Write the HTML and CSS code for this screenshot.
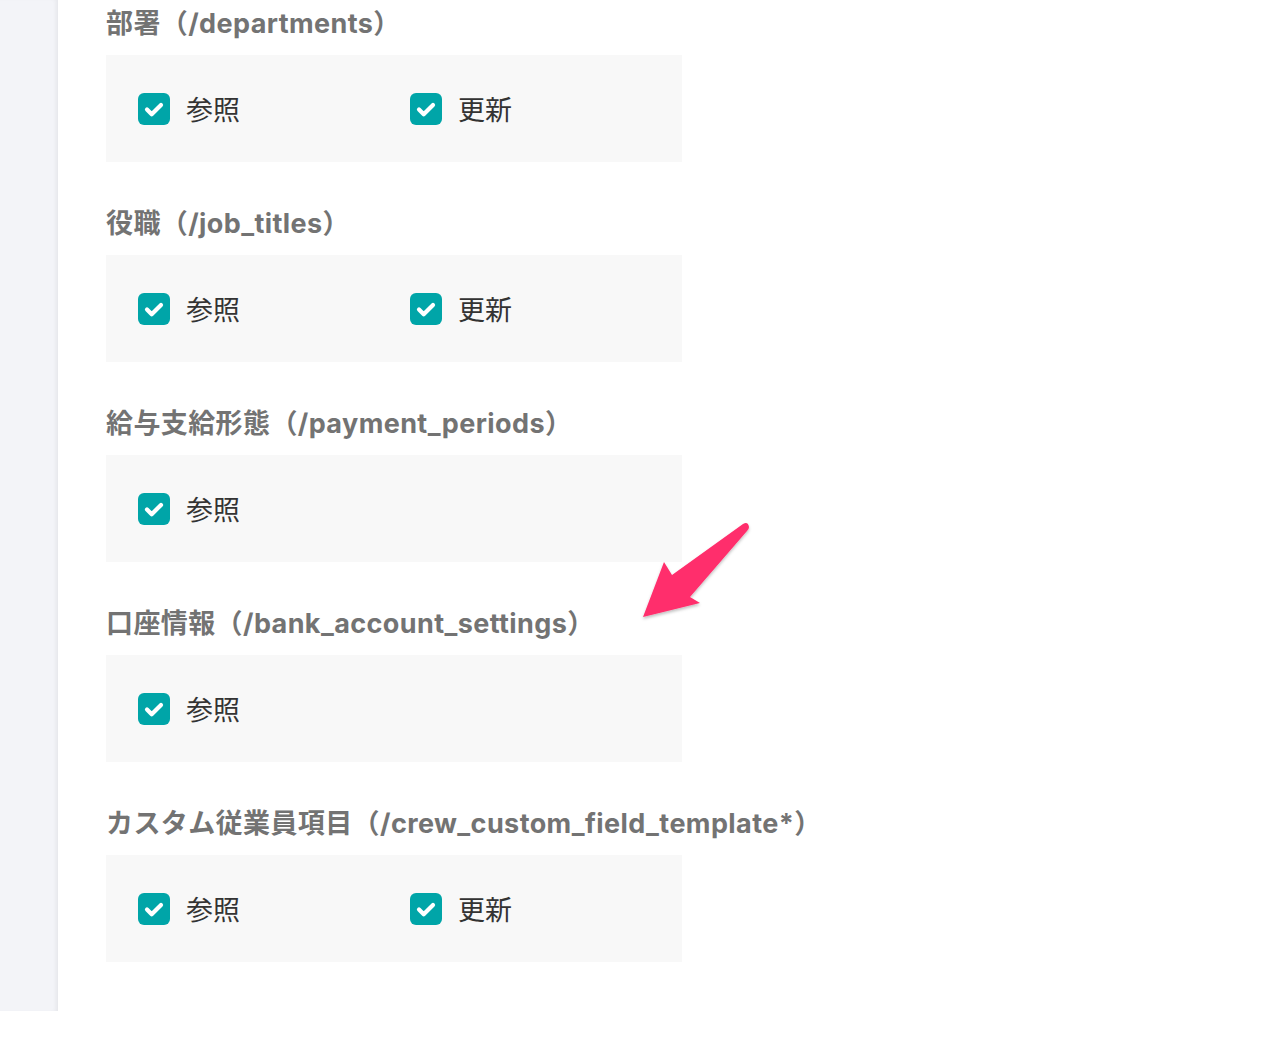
FILE: index.html
```html
<!DOCTYPE html>
<html lang="ja">
<head>
<meta charset="utf-8">
<link rel="stylesheet" href="styles.css">
</head>
<body>
<div class="layout">
  <aside class="sidebar"></aside>
  <main class="main">
    <section class="perm">
      <h2 class="perm-title">部署（/departments）</h2>
      <div class="perm-box">
        <label class="check"><span class="box"><svg viewBox="0 0 32 32"><path d="M9 16.5l4.7 4.7 9.3-9.3" /></svg></span><span class="check-label">参照</span></label>
        <label class="check"><span class="box"><svg viewBox="0 0 32 32"><path d="M9 16.5l4.7 4.7 9.3-9.3" /></svg></span><span class="check-label">更新</span></label>
      </div>
    </section>
    <section class="perm">
      <h2 class="perm-title">役職（/job_titles）</h2>
      <div class="perm-box">
        <label class="check"><span class="box"><svg viewBox="0 0 32 32"><path d="M9 16.5l4.7 4.7 9.3-9.3" /></svg></span><span class="check-label">参照</span></label>
        <label class="check"><span class="box"><svg viewBox="0 0 32 32"><path d="M9 16.5l4.7 4.7 9.3-9.3" /></svg></span><span class="check-label">更新</span></label>
      </div>
    </section>
    <section class="perm">
      <h2 class="perm-title">給与支給形態（/payment_periods）</h2>
      <div class="perm-box">
        <label class="check"><span class="box"><svg viewBox="0 0 32 32"><path d="M9 16.5l4.7 4.7 9.3-9.3" /></svg></span><span class="check-label">参照</span></label>
      </div>
    </section>
    <section class="perm">
      <h2 class="perm-title">口座情報（/bank_account_settings）</h2>
      <div class="perm-box">
        <label class="check"><span class="box"><svg viewBox="0 0 32 32"><path d="M9 16.5l4.7 4.7 9.3-9.3" /></svg></span><span class="check-label">参照</span></label>
      </div>
    </section>
    <section class="perm">
      <h2 class="perm-title">カスタム従業員項目（/crew_custom_field_template*）</h2>
      <div class="perm-box">
        <label class="check"><span class="box"><svg viewBox="0 0 32 32"><path d="M9 16.5l4.7 4.7 9.3-9.3" /></svg></span><span class="check-label">参照</span></label>
        <label class="check"><span class="box"><svg viewBox="0 0 32 32"><path d="M9 16.5l4.7 4.7 9.3-9.3" /></svg></span><span class="check-label">更新</span></label>
      </div>
    </section>
  </main>
</div>
<svg class="arrow" width="1270" height="1052" viewBox="0 0 1270 1052">
  <defs>
    <filter id="sh" x="-20%" y="-20%" width="140%" height="140%">
      <feDropShadow dx="0" dy="2" stdDeviation="1.5" flood-color="#000" flood-opacity="0.25"/>
    </filter>
  </defs>
  <path filter="url(#sh)" fill="#ff2e6c" d="M643 617 L664 562 L672 575 L743 524 Q748 521 749 527 Q749 529 747 531 L690 597 L700 603 Z"/>
</svg>
</body>
</html>
```
FILE: styles.css
```css
html, body {
  margin: 0;
  padding: 0;
  background: #ffffff;
}
body {
  font-family: "Noto Sans CJK JP", "Noto Sans", sans-serif;
  width: 1270px;
  height: 1052px;
  overflow: hidden;
  position: relative;
}
.layout {
  display: flex;
  align-items: flex-start;
}
.sidebar {
  width: 58px;
  height: 1011px;
  background: #f3f4f8;
  box-shadow: inset -4px 0 4px -2px rgba(0, 0, 0, 0.06);
  flex-shrink: 0;
}
.main {
  padding: 4px 0 0 48px;
  display: flex;
  flex-direction: column;
  gap: 42px;
}
.perm {
  display: flex;
  flex-direction: column;
}
.perm-title {
  margin: 0 0 11px;
  height: 40px;
  line-height: 40px;
  font-size: 27px;
  font-weight: 700;
  letter-spacing: 0.4px;
  color: #737373;
  white-space: nowrap;
  font-family: Inter, "Noto Sans CJK JP", sans-serif;
}
.perm-box {
  width: 576px;
  height: 107px;
  box-sizing: border-box;
  background: #f8f8f8;
  padding: 0 32px;
  display: flex;
  align-items: center;
}
.check {
  width: 272px;
  flex-shrink: 0;
  display: flex;
  align-items: center;
  gap: 16px;
}
.box {
  width: 32px;
  height: 32px;
  border-radius: 6px;
  background: #00a5a8;
  display: flex;
  flex-shrink: 0;
}
.box svg {
  width: 32px;
  height: 32px;
}
.box path {
  fill: none;
  stroke: #ffffff;
  stroke-width: 4.2;
  stroke-linecap: round;
  stroke-linejoin: round;
}
.check-label {
  font-size: 27px;
  color: #333333;
  line-height: 32px;
}
.arrow {
  position: absolute;
  left: 0;
  top: 0;
  pointer-events: none;
}
```
